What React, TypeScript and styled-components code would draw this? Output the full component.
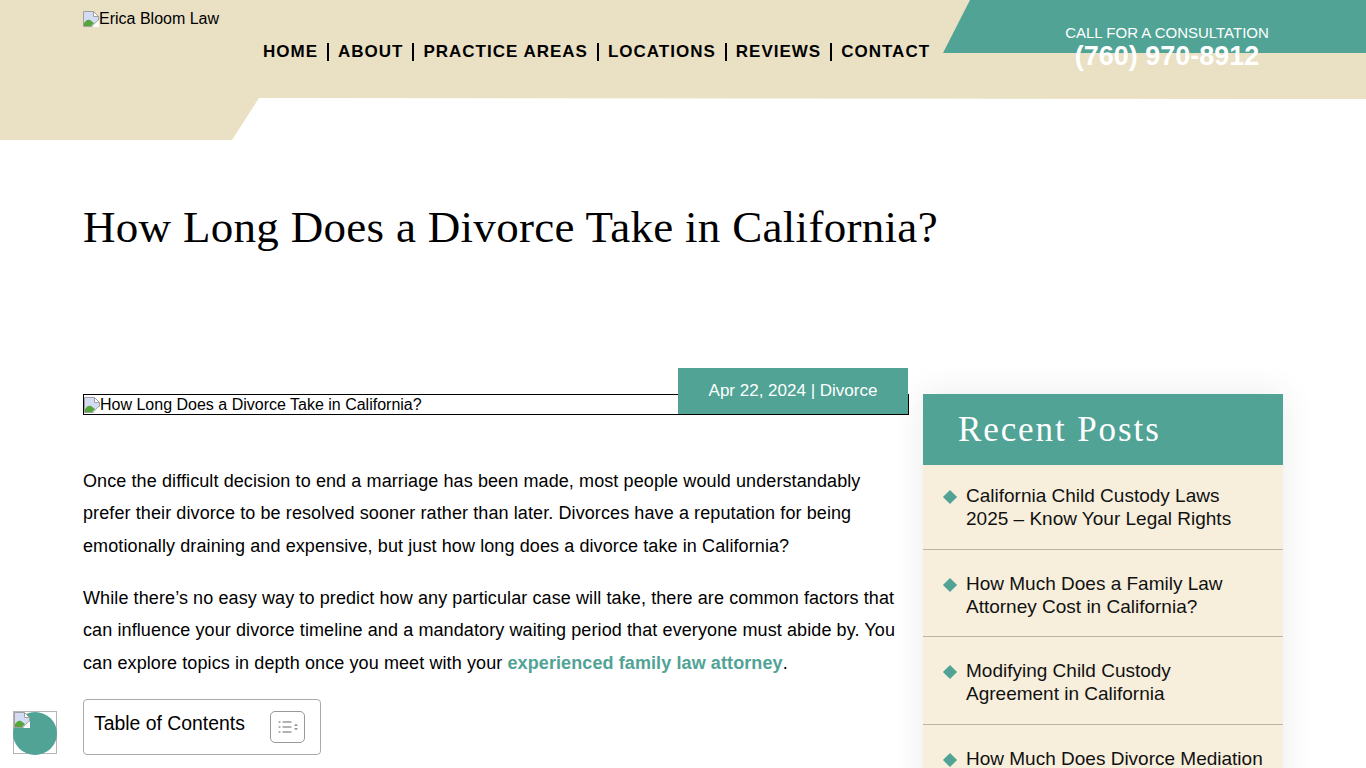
import styled, { createGlobalStyle } from 'styled-components'

const teal = '#50a395'
const beige = '#eae0c4'

const navItems = ['HOME', 'ABOUT', 'PRACTICE AREAS', 'LOCATIONS', 'REVIEWS', 'CONTACT']

const recentPosts = [
  ['California Child Custody Laws', '2025 – Know Your Legal Rights'],
  ['How Much Does a Family Law', 'Attorney Cost in California?'],
  ['Modifying Child Custody', 'Agreement in California'],
  ['How Much Does Divorce Mediation', 'Cost in California?'],
]

const GlobalStyle = createGlobalStyle`
  html, body {
    margin: 0;
    height: 100%;
    overflow: hidden;
    background: #fff;
    color: #000;
    font-family: 'Liberation Sans', Arial, sans-serif;
  }
`

const Header = styled.header`
  position: relative;
  height: 140px;
`

const HeaderShape = styled.div`
  display: flex;
  align-items: flex-start;
  height: 140px;
  padding-left: 83px;
  background: ${beige};
  clip-path: polygon(0 0, 100% 0, 100% 99px, 259px 98px, 232px 140px, 0 140px);
`

const Logo = styled.div`
  display: flex;
  align-items: flex-start;
  width: 180px;
  padding-top: 11px;
  font-size: 16px;
  line-height: 16px;
  color: #000;
`

const Nav = styled.nav`
  display: flex;
  align-items: center;
  padding-top: 43px;
`

const NavLink = styled.a<{ $last?: boolean }>`
  font-size: 17px;
  line-height: 18px;
  font-weight: 700;
  letter-spacing: 1px;
  color: #000;
  white-space: nowrap;
  padding-right: ${(p) => (p.$last ? 0 : '9px')};
  margin-right: ${(p) => (p.$last ? 0 : '9px')};
  border-right: ${(p) => (p.$last ? 'none' : '2px solid #000')};
`

const CallBanner = styled.div`
  position: absolute;
  top: 0;
  right: 0;
  width: 423px;
  height: 53px;
  background: ${teal};
  clip-path: polygon(27px 0, 100% 0, 100% 100%, 0 100%);
`

const CallText = styled.div`
  position: absolute;
  top: 24px;
  left: 968px;
  width: 398px;
  text-align: center;
  color: #fff;
`

const CallLabel = styled.div`
  font-size: 15px;
  line-height: 17px;
`

const CallPhone = styled.div`
  font-size: 27px;
  line-height: 30px;
  font-weight: 700;
`

const Main = styled.main`
  padding: 0 83px;
`

const Title = styled.h1`
  margin: 0;
  padding-top: 61px;
  font-family: 'Liberation Serif', 'Times New Roman', serif;
  font-size: 45px;
  line-height: 52px;
  font-weight: 400;
  letter-spacing: 0.3px;
  white-space: nowrap;
`

const Columns = styled.div`
  display: grid;
  grid-template-columns: 826px 360px;
  column-gap: 14px;
  margin-top: 115px;
  align-items: start;
`

const Article = styled.article`
  position: relative;
  padding-top: 26px;
`

const ImageAlt = styled.div`
  display: flex;
  align-items: center;
  height: 19px;
  border: 1px solid #000;
  font-size: 16px;
  line-height: 19px;
`

const DateBadge = styled.div`
  position: absolute;
  top: 0;
  right: 1px;
  width: 230px;
  height: 46px;
  background: ${teal};
  color: #fff;
  font-size: 17px;
  line-height: 45px;
  text-align: center;
`

const Paragraph = styled.p`
  margin: 0 0 20px;
  font-size: 18px;
  line-height: 32.5px;
  letter-spacing: 0.1px;
  white-space: nowrap;
`

const Intro = styled(Paragraph)`
  margin-top: 49.5px;
  margin-bottom: 19.5px;
`

const InlineLink = styled.a`
  color: ${teal};
  font-weight: 700;
`

const Toc = styled.div`
  display: flex;
  align-items: flex-start;
  justify-content: space-between;
  box-sizing: border-box;
  width: 238px;
  height: 56px;
  padding: 12px 15px 0 10px;
  border: 1px solid #aaa;
  border-radius: 4px;
  font-size: 19.4px;
  line-height: 22px;
`

const TocToggle = styled.div`
  display: flex;
  align-items: center;
  justify-content: center;
  box-sizing: border-box;
  width: 35px;
  height: 32px;
  margin-top: -1px;
  border: 1px solid #999;
  border-radius: 5px;
`

const Sidebar = styled.aside`
  margin-top: 26px;
  background: #f7efdc;
  box-shadow: 0 0 30px rgba(60, 60, 90, 0.1);
`

const SidebarTitle = styled.h2`
  margin: 0;
  height: 71px;
  padding-left: 35px;
  background: ${teal};
  color: #fff;
  font-family: 'Liberation Serif', 'Times New Roman', serif;
  font-size: 35px;
  line-height: 71px;
  font-weight: 400;
  letter-spacing: 1.9px;
`

const PostList = styled.ul`
  margin: 0;
  padding: 0;
  list-style: none;
`

const PostItem = styled.li`
  display: flex;
  gap: 10px;
  padding: 23px 0 18.2px 20px;
  border-bottom: 1px solid #b9b3a2;
  font-size: 19px;
  line-height: 22.6px;
  color: #111;
  white-space: nowrap;

  &:first-child {
    padding-top: 20px;
    padding-bottom: 18.8px;
  }
`

const Diamond = styled.span`
  flex: none;
  width: 10px;
  height: 10px;
  margin: 7px 1px 0 2px;
  background: ${teal};
  transform: rotate(45deg);
`

const AccessWidget = styled.div`
  position: fixed;
  left: 13px;
  bottom: 14px;
  width: 44px;
  height: 43px;
  box-sizing: border-box;
  border: 1px solid #b5b5b5;
`

const AccessCircle = styled.div`
  position: absolute;
  left: -1px;
  top: 0;
  width: 44px;
  height: 43px;
  border-radius: 50%;
  background: ${teal};
`

const BrokenIconSlot = styled.span`
  position: relative;
  flex: none;
  display: inline-flex;
  width: 16px;
  height: 16px;
`

const BrokenImage = () => (
  <BrokenIconSlot>
    <svg width="16" height="16" viewBox="0 0 16 16">
      <path d="M.5.5h10l5 5v10h-15z" fill="#d3dcf2" stroke="#a0a0a0" />
      <path d="M10.5.5v5h5z" fill="#fff" stroke="#a0a0a0" />
      <path d="M1 15v-3c2-3 4-4 6-3l4 3-3 3z" fill="#55a63a" />
      <path d="M9 16l7-7v7z" fill="#fff" />
      <path d="M9 15l6-6" stroke="#b0b0b0" />
    </svg>
  </BrokenIconSlot>
)

const TocIcon = () => (
  <svg width="20" height="14" viewBox="0 0 20 14">
    <g stroke="#999" strokeWidth="1.3" strokeLinecap="round">
      <path d="M1 2h1M5 2h8M1 7h1M5 7h8M1 12h1M5 12h8" />
    </g>
    <path d="M16 6l2-2.5L20 6zM16 8l2 2.5L20 8z" fill="#999" />
  </svg>
)

const App = () => (
  <>
    <GlobalStyle />
    <Header>
      <HeaderShape>
        <Logo>
          <BrokenImage />
          Erica Bloom Law
        </Logo>
        <Nav>
          {navItems.map((item, i) => (
            <NavLink key={item} $last={i === navItems.length - 1}>
              {item}
            </NavLink>
          ))}
        </Nav>
      </HeaderShape>
      <CallBanner />
      <CallText>
        <CallLabel>CALL FOR A CONSULTATION</CallLabel>
        <CallPhone>(760) 970-8912</CallPhone>
      </CallText>
    </Header>
    <Main>
      <Title>How Long Does a Divorce Take in California?</Title>
      <Columns>
        <Article>
          <DateBadge>Apr 22, 2024 | Divorce</DateBadge>
          <ImageAlt>
            <BrokenImage />
            How Long Does a Divorce Take in California?
          </ImageAlt>
          <Intro>
            Once the difficult decision to end a marriage has been made, most people would understandably
            <br />
            prefer their divorce to be resolved sooner rather than later. Divorces have a reputation for being
            <br />
            emotionally draining and expensive, but just how long does a divorce take in California?
          </Intro>
          <Paragraph>
            While there’s no easy way to predict how any particular case will take, there are common factors that
            <br />
            can influence your divorce timeline and a mandatory waiting period that everyone must abide by. You
            <br />
            can explore topics in depth once you meet with your{' '}
            <InlineLink>experienced family law attorney</InlineLink>.
          </Paragraph>
          <Toc>
            Table of Contents
            <TocToggle>
              <TocIcon />
            </TocToggle>
          </Toc>
        </Article>
        <Sidebar>
          <SidebarTitle>Recent Posts</SidebarTitle>
          <PostList>
            {recentPosts.map(([a, b]) => (
              <PostItem key={a}>
                <Diamond />
                <div>
                  {a}
                  <br />
                  {b}
                </div>
              </PostItem>
            ))}
          </PostList>
        </Sidebar>
      </Columns>
    </Main>
    <AccessWidget>
      <AccessCircle />
      <BrokenImage />
    </AccessWidget>
  </>
)

export default App
